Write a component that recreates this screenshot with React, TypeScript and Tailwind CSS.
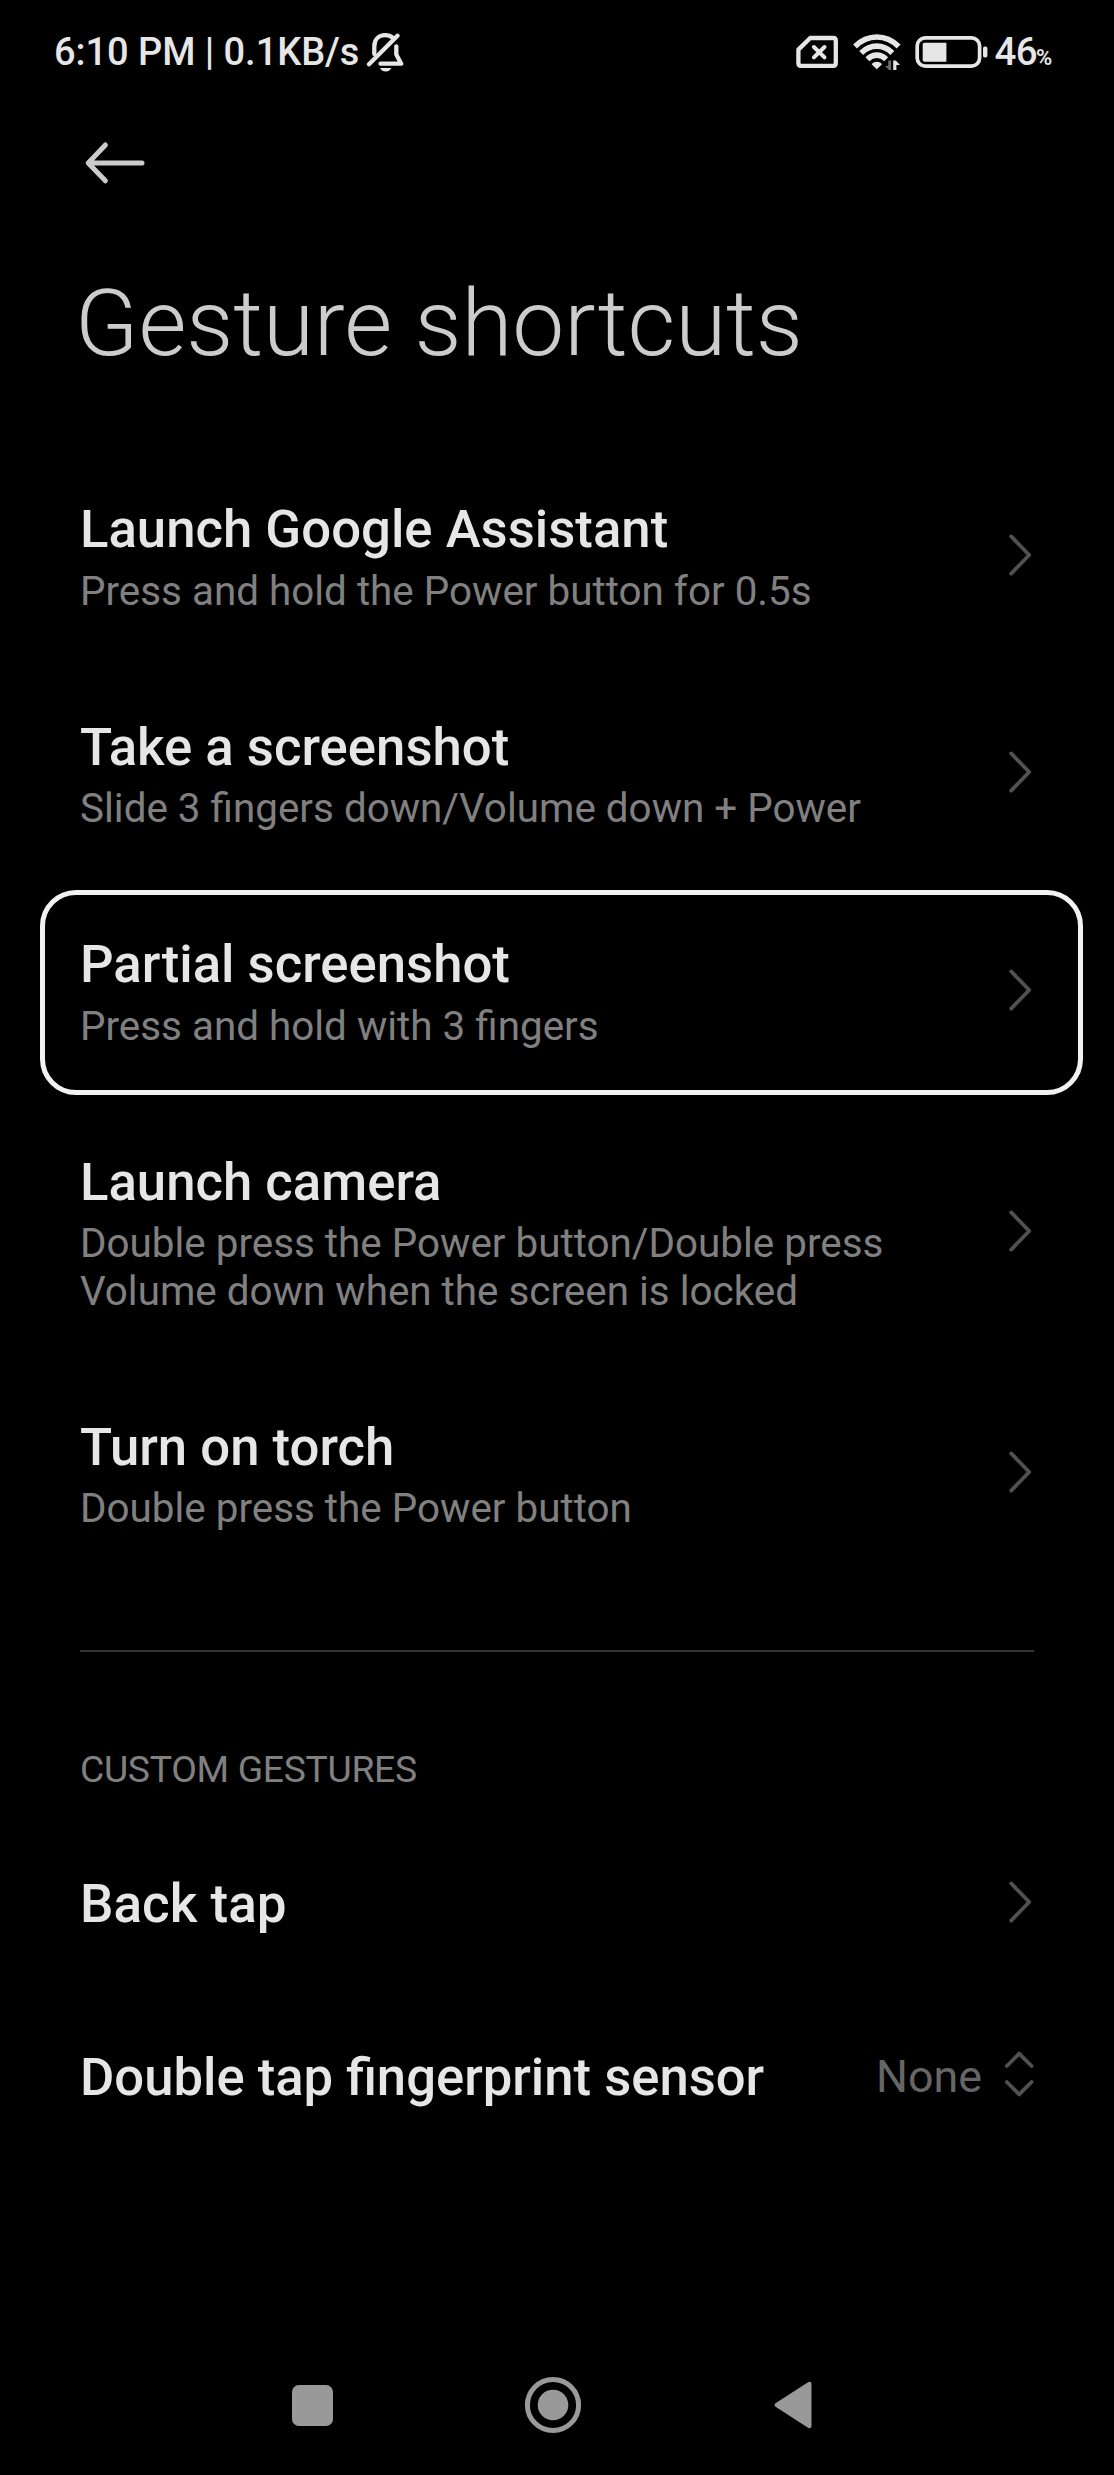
import React from "react";

type Gesture = { title: string; lines: string[]; tall?: boolean; highlighted?: boolean };

const gestures: Gesture[] = [
  { title: "Launch Google Assistant", lines: ["Press and hold the Power button for 0.5s"] },
  { title: "Take a screenshot", lines: ["Slide 3 fingers down/Volume down + Power"] },
  { title: "Partial screenshot", lines: ["Press and hold with 3 fingers"], highlighted: true },
  {
    title: "Launch camera",
    lines: ["Double press the Power button/Double press", "Volume down when the screen is locked"],
    tall: true,
  },
  { title: "Turn on torch", lines: ["Double press the Power button"] },
];

function Chevron() {
  return (
    <svg className="mb-[4px] h-[46px] w-7 shrink-0" viewBox="0 0 28 46" fill="none" stroke="#515151" strokeWidth="3.8" strokeLinecap="round" strokeLinejoin="round">
      <path d="M5.2 4.4 L23.2 23 L5.2 41.6" />
    </svg>
  );
}

function UpDown() {
  return (
    <svg className="mb-[5px] h-[46px] w-[30px] shrink-0" viewBox="0 0 30 46" fill="none" stroke="#515151" strokeWidth="3.8" strokeLinecap="round" strokeLinejoin="round">
      <path d="M2.8 15 L15.2 2.6 L27.6 15 M2.8 31 L15.2 43.4 L27.6 31" />
    </svg>
  );
}

function BellOff() {
  return (
    <svg className="ml-[6.5px] h-10 w-[38px]" viewBox="0 0 38 40" fill="none" stroke="#e6e6e6" strokeWidth="4.3" strokeLinecap="round" strokeLinejoin="round">
      <path d="M8.3 22 V14.5 C8.3 7.5 12.8 3.2 19.2 3.2 C22.2 3.2 24.7 4 26.6 5.6" />
      <path d="M31.5 3.8 L3 32.2" />
      <path d="M30.3 14.5 V22.5 L35.2 31.7 H14.5" />
      <path d="M14 36 H25.4 C24.2 38.4 22.2 39.5 19.7 39.5 C17.2 39.5 15.2 38.4 14 36 Z" fill="#e6e6e6" stroke="none" />
    </svg>
  );
}

function SimMissing() {
  return (
    <svg className="h-[34px] w-[43px]" viewBox="0 0 43 34" fill="none" stroke="#e6e6e6" strokeWidth="4.3" strokeLinejoin="round" strokeLinecap="round">
      <path d="M14.2 3 H37.2 Q39.8 3 39.8 5.6 V28.2 Q39.8 30.8 37.2 30.8 H5 Q2.4 30.8 2.4 28.2 V14.6 Z" />
      <path d="M17.9 12 L28.5 22.4 M28.5 12 L17.9 22.4" strokeWidth="4" />
    </svg>
  );
}

function Wifi() {
  return (
    <svg className="ml-[14px] h-9 w-12" viewBox="0 0 48 36" fill="none" stroke="#e6e6e6" strokeWidth="5.6">
      <path d="M2 12.4 C14.7 -0.2 32.9 -0.2 45.6 12.4" />
      <path d="M8.2 18.9 C17.4 9.9 30.2 9.9 39.4 18.9" />
      <path d="M14.4 25.2 C20 19.8 27.6 19.8 33.2 25.2" />
      <path d="M23.8 35.2 L18.6 30.2 C21.6 27 26 27 29 30.2 Z" fill="#e6e6e6" stroke="none" />
      <path d="M38.2 26.5 V36 H36 L32 32 H35.2 V26.5 Z" fill="#6a6a6a" stroke="none" />
      <path d="M40.2 36 V26.5 H42.8 L47 31 H43.4 V36 Z" fill="#e6e6e6" stroke="none" />
    </svg>
  );
}

function Battery() {
  return (
    <svg className="ml-[14px] h-8 w-[73px]" viewBox="0 0 73 32">
      <rect x="2.2" y="1.9" width="62.4" height="28.2" rx="8" fill="none" stroke="#e6e6e6" strokeWidth="3.7" />
      <path d="M9.5 6.7 H31.4 V25.7 H9.5 Q7.7 25.7 7.7 23.9 V8.5 Q7.7 6.7 9.5 6.7 Z" fill="#e6e6e6" />
      <rect x="68" y="10.6" width="4.4" height="11" rx="1.8" fill="#e6e6e6" />
    </svg>
  );
}

export default function App() {
  return (
    <div className="flex h-[2475px] w-[1114px] flex-col overflow-hidden bg-black font-['Roboto',sans-serif] text-[#e6e6e6]">
      <header className="flex h-[104px] shrink-0 items-center justify-between pl-[54px] pr-[60px]">
        <div className="flex items-center">
          <span className="text-[38px] leading-[48px] font-medium tracking-[-0.05px]">6:10 PM | 0.1KB/s</span>
          <BellOff />
        </div>
        <div className="flex items-center">
          <SimMissing />
          <Wifi />
          <Battery />
          <div className="ml-[6px] flex items-baseline font-medium">
            <span className="text-[38.5px] leading-[48px] tracking-[-0.6px]">46</span>
            <span className="-ml-px w-[18px] text-[22px] font-semibold tracking-[-1px]">%</span>
          </div>
        </div>
      </header>

      <button className="mt-[36px] ml-[84px] h-[46px] w-[62px] shrink-0" aria-label="Back">
        <svg className="h-[46px] w-[62px]" viewBox="0 0 62 46" fill="none" stroke="#cccccc" strokeWidth="5" strokeLinecap="round" strokeLinejoin="round">
          <path d="M58 22.9 H4.4 M21.4 5 L4.2 22.9 L21.4 40.8" />
        </svg>
      </button>

      <h1 className="mt-[82px] pl-[75px] text-[92.8px] leading-[112px] font-light tracking-[-0.1px] text-[#cccccc]">Gesture shortcuts</h1>

      <main className="mt-[68px] px-20">
        {gestures.map((g) => (
          <div key={g.title} className={g.tall ? "relative flex h-[265px] items-center justify-between" : "relative flex h-[217.5px] items-center justify-between"}>
            {g.highlighted && (
              <div className="absolute top-[7px] -right-[49px] bottom-[5.5px] -left-10 rounded-[36px] border-[5px] border-[#f2f2f2]" />
            )}
            <div>
              <div className="text-[52.7px] leading-[62px] font-medium">{g.title}</div>
              <div className="mt-[7.5px] text-[40.4px] leading-[47.5px] text-[#808080]">
                {g.lines.map((line) => (
                  <div key={line}>{line}</div>
                ))}
              </div>
            </div>
            <Chevron />
          </div>
        ))}

        <hr className="mt-[67px] h-0.5 border-0 bg-[#333333]" />

        <h2 className="mt-[95px] text-[37.3px] leading-[44px] tracking-[-0.3px] text-[#808080]">CUSTOM GESTURES</h2>
        <div className="mt-[26px] flex h-[173px] items-center justify-between">
          <div className="text-[53px] leading-[62px] font-medium">Back tap</div>
          <Chevron />
        </div>
        <div className="flex h-[173px] items-center justify-between">
          <div className="text-[52.6px] leading-[62px] font-medium">Double tap fingerprint sensor</div>
          <div className="flex items-center gap-[22px]">
            <span className="text-[44.8px] leading-[52px] text-[#666666]">None</span>
            <UpDown />
          </div>
        </div>
      </main>

      <nav className="mt-auto mb-[40px] flex h-[60px] shrink-0 items-center pl-[292px]">
        <div className="size-[41px] rounded-[7px] bg-[#999999]" />
        <svg className="ml-[191px] size-[58px]" viewBox="0 0 58 58">
          <circle cx="29" cy="29" r="25.6" fill="none" stroke="#999999" strokeWidth="5" />
          <circle cx="29" cy="29" r="15.3" fill="#999999" />
        </svg>
        <svg className="ml-[191px] h-12 w-10" viewBox="0 0 40 48" fill="#999999" stroke="#999999" strokeWidth="4" strokeLinejoin="round">
          <path d="M36.5 2.8 V45.2 L3.6 24 Z" />
        </svg>
      </nav>
    </div>
  );
}
